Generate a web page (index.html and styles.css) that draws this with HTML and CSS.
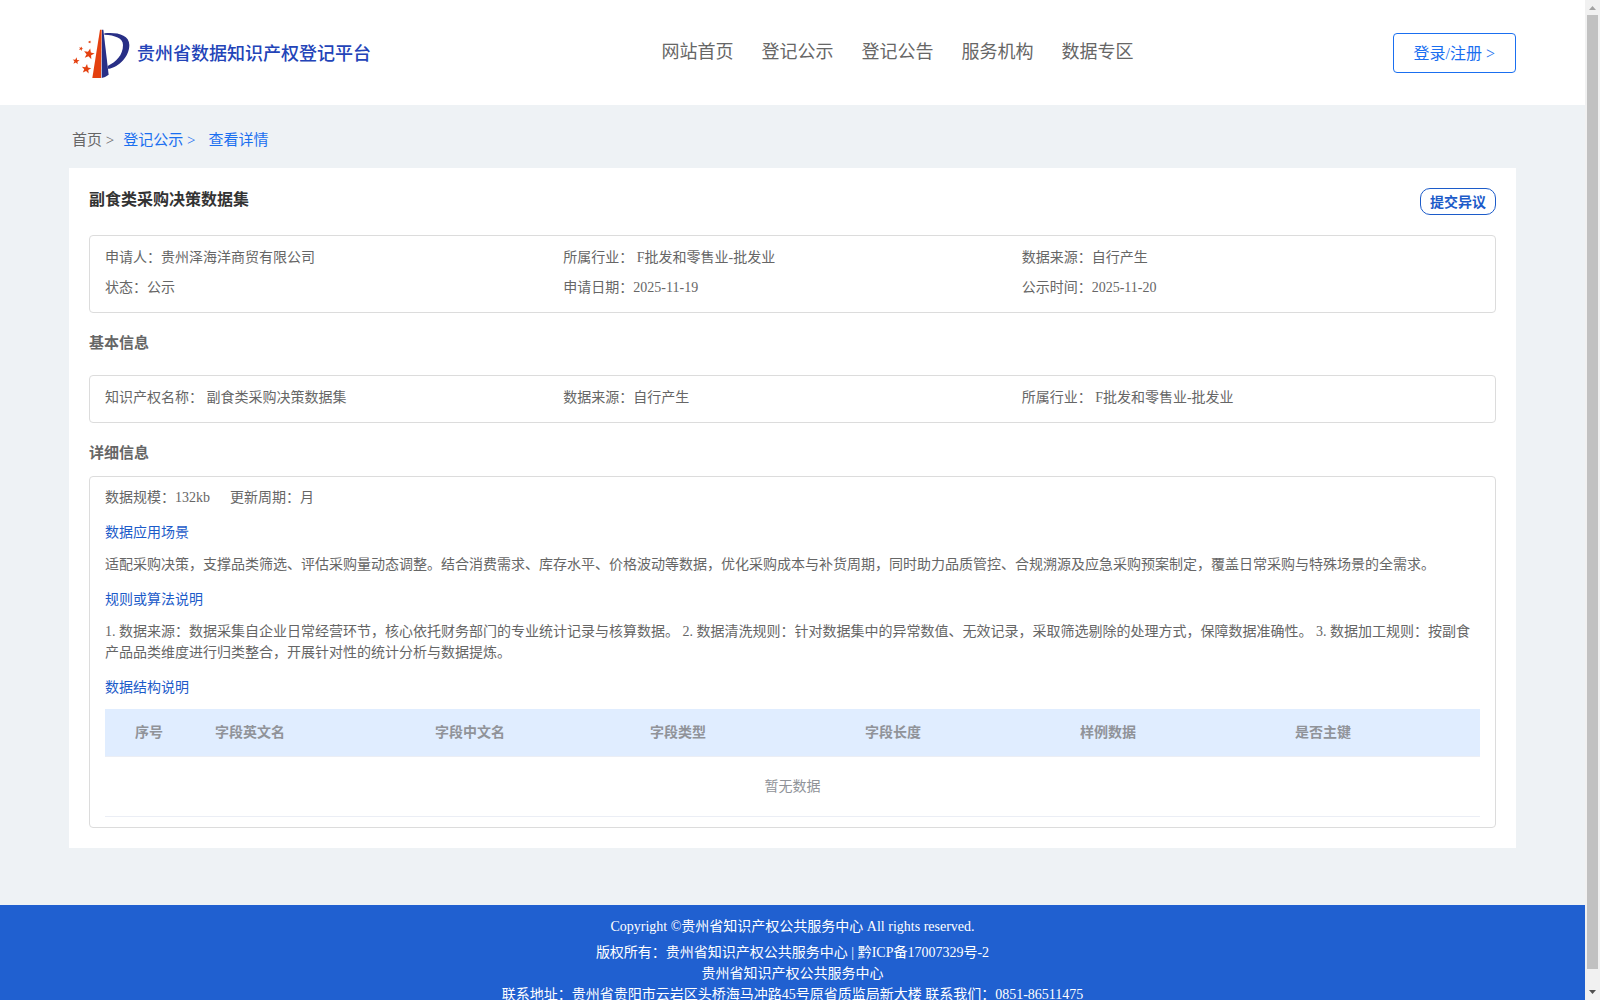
FILE: index.html
```html
<!DOCTYPE html>
<html lang="zh-CN">
<head>
  <meta charset="UTF-8">
  <meta name="viewport" content="width=device-width, initial-scale=1.0">
  <title>贵州省数据知识产权登记平台</title>
  <link rel="stylesheet" href="styles.css">
</head>
<body>
<div class="page">
  <header class="header">
    <a class="logo" href="#">
      <svg width="68" height="60" viewBox="9 0 204 180" aria-hidden="true">
        <defs>
          <path id="star" d="M0-10 2.6-3.4 9.5-3.1 4.1 1.3 5.9 8.1 0 4.2-5.9 8.1-4.1 1.3-9.5-3.1-2.6-3.4z"/>
        </defs>
        <path fill="#e4400f" d="M102 20h5l-2 145H79z"/>
        <g fill="#e4400f">
          <use href="#star" transform="translate(69 93) rotate(12) scale(1.7)"/>
          <use href="#star" transform="translate(61 138) rotate(8) scale(1.5)"/>
          <use href="#star" transform="translate(30 114) rotate(8) scale(1.1)"/>
          <use href="#star" transform="translate(45 77) rotate(20) scale(.7)"/>
          <use href="#star" transform="translate(71 57) rotate(20) scale(.5)"/>
        </g>
        <g fill="#282f86">
          <path d="M108 20h4l16 135q-10 8-21 10z"/>
          <path d="M115 31C150 27 190 34 190 66C190 101 160 131 127 138L125 129C150 117 171 97 171 66C171 44 147 37 115 35z"/>
        </g>
      </svg>
      <span>贵州省数据知识产权登记平台</span>
    </a>
    <nav class="nav">
      <a href="#">网站首页</a>
      <a href="#">登记公示</a>
      <a href="#">登记公告</a>
      <a href="#">服务机构</a>
      <a href="#">数据专区</a>
    </nav>
    <button class="login" type="button">登录/注册 &gt;</button>
  </header>

  <main class="main">
    <div class="crumbs">
      <a class="home" href="#">首页 &gt;</a>
      <a href="#">登记公示 &gt;</a>
      <a class="current" href="#">查看详情</a>
    </div>

    <section class="card">
      <div class="card-head">
        <h1>副食类采购决策数据集</h1>
        <button class="objection" type="button">提交异议</button>
      </div>
      <div class="box info">
        <div>申请人：贵州泽海洋商贸有限公司</div>
        <div>所属行业： F批发和零售业-批发业</div>
        <div>数据来源：自行产生</div>
        <div>状态：公示</div>
        <div>申请日期：2025-11-19</div>
        <div>公示时间：2025-11-20</div>
      </div>

      <h2 class="basic">基本信息</h2>
      <div class="box info">
        <div>知识产权名称： 副食类采购决策数据集</div>
        <div>数据来源：自行产生</div>
        <div>所属行业： F批发和零售业-批发业</div>
      </div>

      <h2>详细信息</h2>
      <div class="box detail">
        <div class="scale">
          <span>数据规模：132kb</span>
          <span>更新周期：月</span>
        </div>
        <h3>数据应用场景</h3>
        <p>适配采购决策，支撑品类筛选、评估采购量动态调整。结合消费需求、库存水平、价格波动等数据，优化采购成本与补货周期，同时助力品质管控、合规溯源及应急采购预案制定，覆盖日常采购与特殊场景的全需求。</p>
        <h3>规则或算法说明</h3>
        <p>1. 数据来源：数据采集自企业日常经营环节，核心依托财务部门的专业统计记录与核算数据。 2. 数据清洗规则：针对数据集中的异常数值、无效记录，采取筛选剔除的处理方式，保障数据准确性。 3. 数据加工规则：按副食产品品类维度进行归类整合，开展针对性的统计分析与数据提炼。</p>
        <h3>数据结构说明</h3>
        <table class="fields">
          <thead>
            <tr>
              <th class="col-no">序号</th>
              <th class="col-en">字段英文名</th>
              <th>字段中文名</th>
              <th>字段类型</th>
              <th>字段长度</th>
              <th>样例数据</th>
              <th>是否主键</th>
            </tr>
          </thead>
          <tbody>
            <tr>
              <td colspan="7">暂无数据</td>
            </tr>
          </tbody>
        </table>
      </div>
    </section>
  </main>

  <footer class="footer">
    <p class="copyright">Copyright ©贵州省知识产权公共服务中心 All rights reserved.</p>
    <p>版权所有：贵州省知识产权公共服务中心 | 黔ICP备17007329号-2</p>
    <p>贵州省知识产权公共服务中心</p>
    <p>联系地址：贵州省贵阳市云岩区头桥海马冲路45号原省质监局新大楼 联系我们：0851-86511475</p>
  </footer>
</div>

<div class="scrollbar" aria-hidden="true">
  <svg width="15" height="15" viewBox="0 0 15 15"><path fill="#a3a3a3" d="M4 10h7L7.500 6z"/></svg>
  <div class="thumb"></div>
  <svg width="15" height="15" viewBox="0 0 15 15"><path fill="#505050" d="M4 5h7L7.500 9z"/></svg>
</div>
</body>
</html>
```
FILE: styles.css
```css
* {
  box-sizing: border-box;
}
body {
  margin: 0;
  display: flex;
  height: 100vh;
  overflow: hidden;
  font-family: "Liberation Serif", "Noto Sans CJK SC", serif;
  font-size: 14px;
  line-height: 21px;
  color: #666;
  background: #eef2f5;
}
h1, h2, h3, p {
  margin: 0;
}
a {
  color: inherit;
  text-decoration: none;
}
button {
  font-family: inherit;
  background: #fff;
  cursor: pointer;
}
.page {
  flex: 1;
  min-width: 0;
  overflow: hidden;
}

/* header */
.header {
  display: grid;
  grid-template-columns: 1fr auto 1fr;
  align-items: center;
  height: 105px;
  padding: 0 69px;
  background: #fff;
}
.logo {
  display: flex;
  align-items: center;
  font-size: 18px;
  font-weight: 500;
  color: #2344b8;
}
.logo span {
  padding-top: 4px;
}
.nav {
  display: flex;
  gap: 28px;
  margin-left: 210px;
  font-size: 18px;
}
.login {
  justify-self: end;
  height: 40px;
  padding: 0 20px 2px;
  border: 1px solid #1a6ff0;
  border-radius: 4px;
  font-size: 16px;
  color: #1a6ff0;
}

/* content */
.main {
  padding: 0 69px 57px;
}
.crumbs {
  display: flex;
  gap: 9px;
  padding: 20px 3px 13px;
  font-size: 15px;
  line-height: 30px;
  color: #1a6ff0;
}
.crumbs .home {
  color: #666;
}
.crumbs .current {
  padding-left: 4px;
}
.card {
  padding: 20px;
  background: #fff;
}
.card-head {
  display: flex;
  justify-content: space-between;
  align-items: flex-start;
  height: 47px;
}
.card-head h1 {
  font-size: 16px;
  line-height: 24px;
  color: #333;
}
.objection {
  height: 27px;
  padding: 0 9px 2px;
  border: 1px solid #1c5bc9;
  border-radius: 10px;
  font-size: 14px;
  font-weight: bold;
  color: #1c5bc9;
}
.box {
  border: 1px solid #dcdcdc;
  border-radius: 4px;
}
.info {
  display: grid;
  grid-template-columns: repeat(3, 1fr);
  padding: 7px 15px 9px;
  line-height: 30px;
}
.card h2 {
  padding: 15px 0 8px;
  font-size: 15px;
  line-height: 30px;
}
.card .basic {
  padding-bottom: 17px;
}
.detail {
  padding: 10px 15px;
}
.scale {
  display: flex;
  gap: 20px;
}
.detail h3 {
  padding: 14px 0 11px;
  font-size: 14px;
  font-weight: normal;
  color: #1c5bc9;
}
.fields {
  width: 100%;
  table-layout: fixed;
  border-collapse: collapse;
  color: #909399;
}
.fields th {
  height: 47px;
  padding: 0 0 0 30px;
  border-bottom: 1px solid #ebeef5;
  text-align: left;
  background: #e0edff;
}
.fields .col-no {
  width: 80px;
}
.fields .col-en {
  width: 220px;
}
.fields td {
  height: 60px;
  padding: 0;
  border-bottom: 1px solid #ebeef5;
  text-align: center;
}

/* footer */
.footer {
  padding: 7px 0 11px;
  text-align: center;
  color: #fff;
  background: #2060d0;
}
.footer .copyright {
  line-height: 30px;
}

/* scrollbar */
.scrollbar {
  display: flex;
  flex-direction: column;
  width: 15px;
  background: #f1f1f1;
}
.scrollbar .thumb {
  flex: 1;
  margin: 0 0 16px 2px;
  width: 11px;
  background: #c1c1c1;
}
```
